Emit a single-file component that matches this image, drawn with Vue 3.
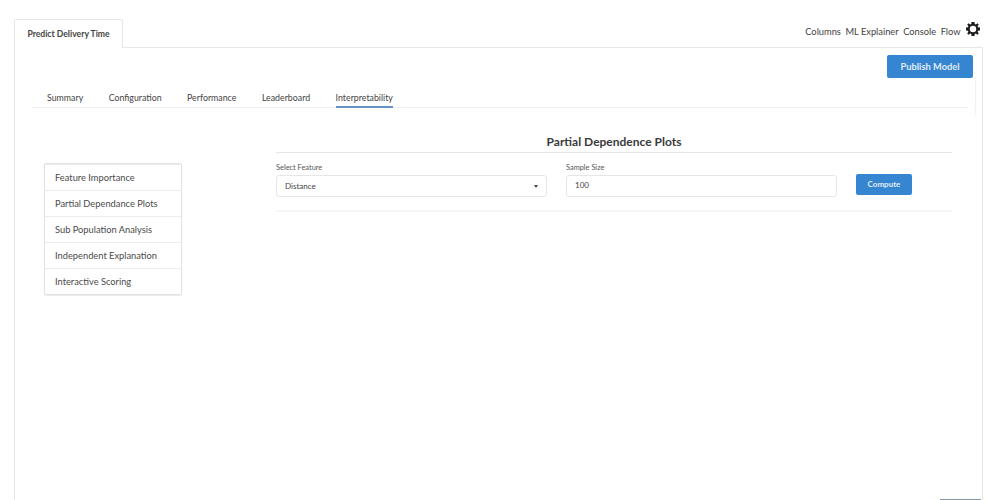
<script setup>
const subtabs = ['Summary', 'Configuration', 'Performance', 'Leaderboard', 'Interpretability']
const links = ['Columns', 'ML Explainer', 'Console', 'Flow']
const menu = ['Feature Importance', 'Partial Dependance Plots', 'Sub Population Analysis', 'Independent Explanation', 'Interactive Scoring']
</script>

<template>
  <div class="page">
    <header class="top">
      <div class="tab">Predict Delivery Time</div>
      <nav class="links">
        <span v-for="l in links" :key="l">{{ l }}</span>
        <svg class="gear" viewBox="0 0 24 24" width="14" height="14" aria-hidden="true">
          <path fill="#1d1d1d" fill-rule="evenodd" d="M9.500 0h5l.5 3.300 1.900.8L19.600 2.100l2.300 2.300-2 2.700.8 1.900 3.300.5v5l-3.300.5-.8 1.900 2 2.700-2.300 2.300-2.700-2-1.900.8-.5 3.300h-5l-.5-3.300-1.900-.8-2.700 2-2.300-2.300 2-2.700-.8-1.900L0 14.500v-5l3.300-.5.8-1.900-2-2.700 2.300-2.300 2.700 2 1.900-.8zM12 6.500a5.500 5.500 0 1 0 0 11 5.500 5.500 0 0 0 0-11z" />
        </svg>
      </nav>
    </header>

    <section class="panel">
      <div class="actions"><button class="publish">Publish Model</button></div>
      <div class="subtabs">
        <span v-for="t in subtabs" :key="t" class="subtab" :class="{ active: t === 'Interpretability' }">{{ t }}</span>
      </div>
      <div class="edge"></div>

      <div class="body">
        <ul class="menu">
          <li v-for="m in menu" :key="m">{{ m }}</li>
        </ul>
        <div class="main">
          <h2 class="title">Partial Dependence Plots</h2>
          <div class="form">
            <div class="field">
              <label>Select Feature</label>
              <div class="control select">
                <span>Distance</span>
                <i class="caret"></i>
              </div>
            </div>
            <div class="field">
              <label>Sample Size</label>
              <div class="control">100</div>
            </div>
            <button class="compute">Compute</button>
          </div>
        </div>
      </div>
    </section>
    <div class="thumb"></div>
  </div>
</template>

<style>
html, body { margin: 0; background: #fff; }
</style>

<style scoped>
.page {
  position: relative;
  width: 999px;
  height: 500px;
  overflow: hidden;
  box-sizing: border-box;
  padding: 19px 0 0 14px;
  background: #fff;
  font-family: Lato, "Liberation Sans", sans-serif;
  color: #3c3c3c;
}
.top {
  display: flex;
  justify-content: space-between;
  align-items: flex-start;
  height: 29px;
  width: 966px;
}
.tab {
  box-sizing: border-box;
  width: 109px;
  height: 29px;
  position: relative;
  z-index: 1;
  border: 1px solid #e6e6e6;
  border-bottom: 0;
  border-radius: 2px 2px 0 0;
  background: #fff;
  font-size: 8.600px;
  font-weight: 700;
  line-height: 29px;
  text-align: center;
  color: #444;
}
.links {
  display: flex;
  align-items: center;
  gap: 4.500px;
  margin-top: 7px;
  font-size: 9.300px;
  color: #3f3f3f;
}
.gear { margin: -5px 0 0 1px; }
.panel {
  box-sizing: border-box;
  width: 969px;
  height: 470px;
  margin-top: -1px;
  position: relative;
  border: 1px solid #e8e8e8;
  padding: 7px 9px 0 16px;
}
.actions {
  display: flex;
  justify-content: flex-end;
  height: 23px;
}
.publish {
  width: 86px;
  height: 23px;
  border: 0;
  border-radius: 2px;
  background: #3585d0;
  color: #e0ecf8;
  font-family: inherit;
  font-size: 9.300px;
  font-weight: 700;
  padding: 0;
}
.subtabs {
  display: flex;
  gap: 25.500px;
  height: 30px;
  margin-right: 4px;
  padding-left: 16px;
  border-bottom: 1px solid #f0f0f0;
  box-sizing: border-box;
}
.subtab {
  box-sizing: border-box;
  height: 30px;
  padding-top: 14px;
  font-size: 8.800px;
  line-height: 12px;
  color: #444;
  white-space: nowrap;
}
.subtab.active { border-bottom: 2px solid #6496c3; }
.edge {
  position: absolute;
  top: 30px;
  right: 6px;
  width: 1px;
  height: 37px;
  background: #f1f1f1;
}
.body {
  display: flex;
  align-items: flex-start;
  padding-left: 13px;
}
.menu {
  box-sizing: border-box;
  width: 138px;
  margin: 55px 0 0;
  padding: 0;
  list-style: none;
  border: 1px solid #e2e2e2;
  border-radius: 2px;
  box-shadow: 0 1px 1px rgba(0, 0, 0, .08);
}
.menu li {
  box-sizing: border-box;
  height: 26px;
  padding-left: 10px;
  border-top: 1px solid #ececec;
  font-size: 9.300px;
  line-height: 25px;
  color: #4a4a4a;
  white-space: nowrap;
}
.main {
  box-sizing: border-box;
  width: 676px;
  margin: 24px 0 0 94px;
}
.title {
  margin: 0;
  height: 20px;
  border-bottom: 1px solid #e6e6e6;
  font-size: 12px;
  font-weight: 700;
  line-height: 20px;
  text-align: center;
  color: #3a3a3a;
}
.form {
  display: flex;
  align-items: flex-start;
  height: 57px;
  border-bottom: 2px solid #f6f6f6;
}
.field {
  width: 271px;
  margin-right: 19px;
}
.field label {
  display: block;
  height: 22px;
  font-size: 7.400px;
  line-height: 29px;
  color: #555;
}
.control {
  box-sizing: border-box;
  height: 22px;
  padding-left: 8px;
  border: 1px solid #e6e6e6;
  border-radius: 3px;
  font-size: 8px;
  line-height: 18px;
  color: #444;
}
.select {
  display: flex;
  justify-content: space-between;
  align-items: center;
  padding-right: 8px;
}
.caret {
  width: 0;
  height: 0;
  border: 2.500px solid transparent;
  border-top: 3px solid #444;
  border-bottom: 0;
}
.compute {
  width: 56px;
  height: 21px;
  margin-top: 21px;
  border: 0;
  border-radius: 2px;
  background: #3585d0;
  color: #e0ecf8;
  font-family: inherit;
  font-size: 8px;
  font-weight: 700;
  padding: 0 0 1px;
}
.thumb {
  position: absolute;
  left: 940px;
  bottom: 0;
  width: 41px;
  height: 1px;
  background: #8a9aa5;
}
</style>
